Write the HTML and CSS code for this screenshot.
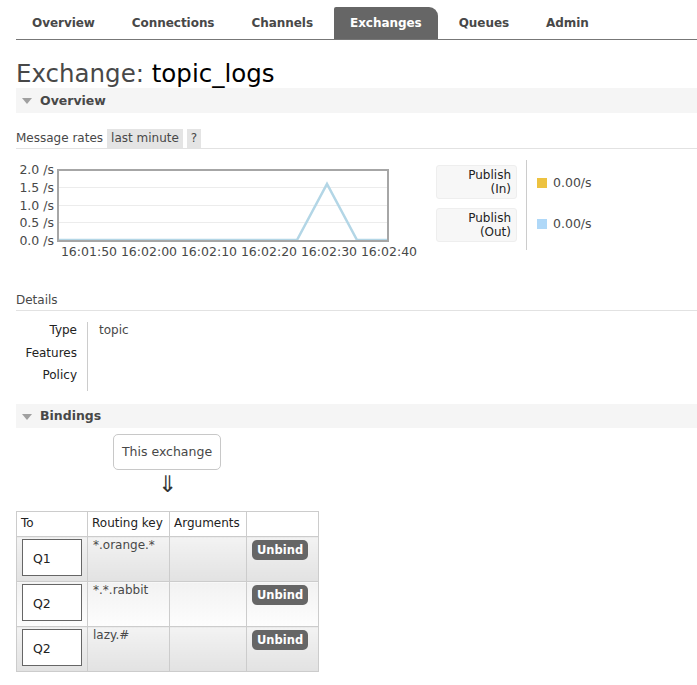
FILE: index.html
```html
<!DOCTYPE html>
<html>
<head>
<meta charset="utf-8">
<link rel="stylesheet" href="styles.css">
</head>
<body>
<div class="page">
  <ul class="tabs">
    <li>Overview</li>
    <li>Connections</li>
    <li>Channels</li>
    <li class="active">Exchanges</li>
    <li>Queues</li>
    <li>Admin</li>
  </ul>

  <h1><span class="h1-label">Exchange:</span> <b>topic_logs</b></h1>

  <div class="section-head"><span class="tri"></span>Overview</div>

  <div class="rates-bar">
    <span>Message rates</span>
    <span class="pill">last minute</span>
    <span class="pill q">?</span>
  </div>

  <div class="chart-row">
    <svg class="chart" width="420" height="100" viewBox="0 0 420 100">
      <g class="ylab" font-size="12.5" text-anchor="end" fill="#484848">
        <text x="38" y="13">2.0 /s</text>
        <text x="38" y="31">1.5 /s</text>
        <text x="38" y="49">1.0 /s</text>
        <text x="38" y="66">0.5 /s</text>
        <text x="38" y="84">0.0 /s</text>
      </g>
      <g stroke="#ececec" stroke-width="1">
        <line x1="42" y1="26.5" x2="371" y2="26.5"/>
        <line x1="42" y1="44.5" x2="371" y2="44.5"/>
        <line x1="42" y1="61.5" x2="371" y2="61.5"/>
      </g>
      <polyline points="42,79 281,79 311,23 341,79 371,79" fill="none" stroke="#b3d6e6" stroke-width="2.5"/>
      <rect x="42" y="9" width="330" height="71" fill="none" stroke="#a6a6a6" stroke-width="2"/>
      <g font-size="12.5" text-anchor="middle" fill="#484848">
        <text x="73" y="95">16:01:50</text>
        <text x="133" y="95">16:02:00</text>
        <text x="193" y="95">16:02:10</text>
        <text x="253" y="95">16:02:20</text>
        <text x="313" y="95">16:02:30</text>
        <text x="373" y="95">16:02:40</text>
      </g>
    </svg>
    <div class="legend">
      <div class="legend-labels">
        <div class="lbox">Publish<br>(In)</div>
        <div class="lbox">Publish<br>(Out)</div>
      </div>
      <div class="legend-values">
        <div class="lval"><span class="sw yellow"></span>0.00/s</div>
        <div class="lval"><span class="sw blue"></span>0.00/s</div>
      </div>
    </div>
  </div>

  <div class="sub-head">Details</div>

  <div class="details">
    <div class="dlabels">
      <div>Type</div>
      <div>Features</div>
      <div>Policy</div>
    </div>
    <div class="dvalues">
      <div>topic</div>
    </div>
  </div>

  <div class="section-head bind"><span class="tri"></span>Bindings</div>

  <div class="flow">
    <div class="this-ex">This exchange</div>
    <div class="arrow">&#8659;</div>
  </div>

  <table class="bindings">
    <thead>
      <tr><th class="c1">To</th><th class="c2">Routing key</th><th class="c3">Arguments</th><th class="c4"></th></tr>
    </thead>
    <tbody>
      <tr class="alt1"><td><div class="qbox">Q1</div></td><td>*.orange.*</td><td></td><td><span class="btn">Unbind</span></td></tr>
      <tr class="alt2"><td><div class="qbox">Q2</div></td><td>*.*.rabbit</td><td></td><td><span class="btn">Unbind</span></td></tr>
      <tr class="alt1"><td><div class="qbox">Q2</div></td><td>lazy.#</td><td></td><td><span class="btn">Unbind</span></td></tr>
    </tbody>
  </table>
</div>
</body>
</html>
```

FILE: styles.css
```css
* { box-sizing: border-box; }
html, body { margin: 0; padding: 0; background: #fff; }
body {
  font-family: "DejaVu Sans", Verdana, sans-serif;
  font-size: 12px;
  color: #484848;
}
.page { padding-left: 16px; }

.tabs {
  list-style: none;
  margin: 0;
  padding: 7px 0 0 0;
  display: flex;
  gap: 5px;
  border-bottom: 1px solid #777;
  height: 40px;
}
.tabs li {
  font-weight: bold;
  font-size: 12px;
  color: #484848;
  padding: 0 16px;
  height: 32px;
  line-height: 32px;
  letter-spacing: -0.05px;
}
.tabs li.active {
  background: #666;
  color: #fff;
  border-radius: 2px 9px 0 0;
}

h1 {
  margin: 19px 0 0 0;
  font-size: 24.5px;
  font-weight: normal;
  line-height: 29px;
  color: #484848;
  letter-spacing: 0;
}
h1 b { font-weight: normal; color: #000; }

.section-head {
  background: #f5f5f5;
  height: 25px;
  line-height: 25px;
  font-weight: bold;
  font-size: 12.5px;
  color: #484848;
  display: flex;
  align-items: center;
  padding-left: 6px;
}
.tri {
  width: 0; height: 0;
  border-left: 5.5px solid transparent;
  border-right: 5.5px solid transparent;
  border-top: 6px solid #a0a0a0;
  margin-right: 8px;
  margin-top: 1px;
}

.rates-bar {
  margin-top: 16px;
  display: flex;
  align-items: center;
  height: 19px;
  border-bottom: 1px solid #e2e2e2;
  box-sizing: content-box;
}
.rates-bar span { line-height: 19px; }
.pill {
  background: #e4e4e4;
  padding: 0 4px;
  margin-left: 4px;
}
.pill.q { padding: 0 4px; margin-left: 4px; }

.chart-row {
  display: flex;
  margin-top: 12px;
  height: 100px;
}
.chart { display: block; flex: none; }
.legend { display: flex; }
.legend-labels {
  display: flex;
  flex-direction: column;
  gap: 9px;
  padding-top: 5px;
  padding-right: 9px;
  border-right: 1px solid #ccc;
  height: 85px;
  box-sizing: content-box;
  margin-top: -1px;
}
.lbox {
  width: 81px;
  height: 34px;
  background: #f7f7f7;
  border: 1px solid #eee;
  border-radius: 3px;
  text-align: right;
  padding: 2px 5px 0 0;
  line-height: 14px;
  color: #222;
}
.legend-values {
  display: flex;
  flex-direction: column;
  padding-left: 10px;
  padding-top: 14px;
  gap: 26px;
}
.lval {
  display: flex;
  align-items: center;
  height: 15px;
  font-size: 12.5px;
}
.sw { width: 10px; height: 10px; margin-right: 6px; }
.sw.yellow { background: #edc240; }
.sw.blue { background: #afd8f8; }

.sub-head {
  margin-top: 32px;
  padding-bottom: 2px;
  border-bottom: 1px solid #e2e2e2;
  line-height: 15px;
}

.details {
  display: flex;
  margin-top: 11px;
}
.dlabels {
  width: 72px;
  text-align: right;
  padding-right: 10px;
  padding-top: 1px;
  border-right: 1px solid #ccc;
  color: #222;
  height: 69px;
}
.dlabels div { line-height: 15px; }
.dlabels div + div { margin-top: 8px; }
.dlabels div:nth-child(3) { margin-top: 7px; }
.dvalues { padding-left: 11px; padding-top: 1px; line-height: 15px; }

.section-head.bind { margin-top: 13px; height: 24px; line-height: 24px; }

.flow {
  margin-left: 97px;
  width: 108px;
  display: flex;
  flex-direction: column;
  align-items: center;
  margin-top: 6px;
}
.this-ex {
  width: 108px;
  height: 36px;
  border: 1px solid #c8c8c8;
  border-radius: 5px;
  text-align: center;
  line-height: 34px;
  font-size: 12.5px;
}
.arrow {
  font-size: 23px;
  line-height: 24px;
  font-weight: 300;
  color: #333;
  margin-top: 2px;
}

.bindings {
  border-collapse: collapse;
  margin-top: 15px;
  font-size: 12px;
}
.bindings th, .bindings td {
  border: 1px solid #ccc;
  vertical-align: top;
  text-align: left;
}
.bindings th {
  font-weight: normal;
  color: #222;
  height: 25px;
  padding: 4px 4px 0 4px;
  background: #fff;
}
.c1 { width: 71px; }
.c2 { width: 82px; }
.c3 { width: 77px; }
.c4 { width: 72px; }
.bindings td { height: 45px; padding: 1px 5px; }
.bindings td:nth-child(1) { padding: 2px 4px 0 5px; }
tr.alt1 td { background: linear-gradient(#f3f3f3, #e2e2e2); }
tr.alt2 td { background: linear-gradient(#f2f2f2, #fdfdfd); }
.qbox {
  width: 60px;
  height: 37px;
  background: #fff;
  border: 1px solid #666;
  line-height: 37px;
  padding-left: 10px;
  color: #222;
  font-size: 12.5px;
}
.btn {
  display: inline-block;
  margin-top: 2px;
  background: #666;
  color: #fff;
  font-weight: bold;
  font-size: 11.5px;
  border-radius: 5px;
  padding: 0 5px;
  height: 20px;
  line-height: 20px;
}
```
